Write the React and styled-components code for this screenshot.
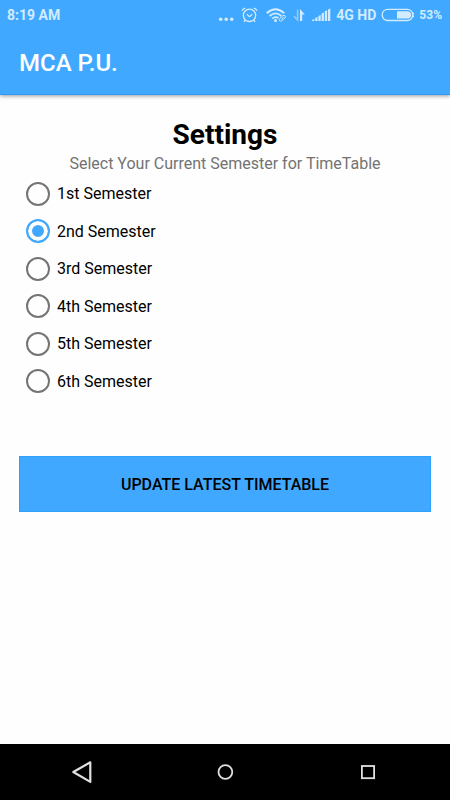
import React, { useState } from "react";
import styled, { createGlobalStyle } from "styled-components";

const blue = "#40a9ff";
const pale = "#d3ebff";

const GlobalStyle = createGlobalStyle`
  *, *::before, *::after { box-sizing: border-box; }
  body { margin: 0; background: #fefefe; font-family: Roboto, "Liberation Sans", sans-serif; }
`;

const Screen = styled.div`
  min-height: 100vh;
  display: flex;
  flex-direction: column;
  background: #fefefe;
`;

const Header = styled.header`
  background: ${blue};
  border-bottom: 1px solid #2b9cf6;
  box-shadow: 0 1px 4px rgba(0, 0, 0, 0.4);
`;

const StatusBar = styled.div`
  display: flex;
  align-items: center;
  justify-content: space-between;
  height: 30px;
  padding: 0 8px 0 7px;
  color: ${pale};
  font-size: 14px;
  font-weight: 700;
`;

const StatusIcons = styled.div`
  display: flex;
  align-items: center;
  gap: 5px;
  svg { display: block; }
`;

const Percent = styled.span`
  font-size: 12px;
`;

const AppBar = styled.div`
  display: flex;
  align-items: center;
  height: 64px;
  padding: 2px 19px 0;
`;

const AppTitle = styled.h1`
  margin: 0;
  color: #fff;
  font-size: 24px;
  font-weight: 500;
  line-height: 32px;
`;

const Content = styled.main`
  flex: 1;
  display: flex;
  flex-direction: column;
  padding: 22px 19px;
`;

const Heading = styled.h2`
  margin: 0;
  color: #000;
  font-size: 28px;
  font-weight: 700;
  line-height: 36px;
  text-align: center;
`;

const Semesters = styled.fieldset`
  margin: 0;
  padding: 0;
  border: 0;
  min-width: 0;
`;

const Hint = styled.legend`
  width: 100%;
  padding: 0;
  color: #737373;
  font-size: 16px;
  line-height: 22px;
  text-align: center;
`;

const Options = styled.div`
  display: grid;
  grid-template-rows: repeat(6, 1fr);
  height: 225px;
`;

const Option = styled.label`
  display: flex;
  align-items: center;
  gap: 7px;
  padding-left: 7px;
  color: #000;
  font-size: 16px;
`;

const Radio = styled.input`
  appearance: none;
  flex: none;
  width: 24px;
  height: 24px;
  margin: 0;
  border: 2px solid #747474;
  border-radius: 50%;
  background: #fefefe;

  &:checked {
    border-color: ${blue};
    background: ${blue};
    box-shadow: inset 0 0 0 4px #fefefe;
  }
`;

const UpdateButton = styled.button`
  height: 56px;
  margin: 56px 0 0;
  padding: 0 16px;
  border: 1px solid #2fa0fb;
  background: ${blue};
  color: #000;
  font-family: inherit;
  font-size: 16px;
  font-weight: 500;
  text-transform: uppercase;
`;

const NavBar = styled.nav`
  display: grid;
  grid-template-columns: repeat(3, 1fr);
  height: 56px;
  padding: 0 11px;
  background: #000;
`;

const NavButton = styled.button`
  display: flex;
  align-items: center;
  justify-content: center;
  padding: 0;
  border: 0;
  background: transparent;
  color: #e0e0e0;
`;

const MoreIcon = () => (
  <svg width="18" height="16" viewBox="0 0 18 16" fill={pale} aria-hidden="true">
    <circle cx="2.7" cy="12.3" r="1.8" />
    <circle cx="8.2" cy="12.3" r="1.8" />
    <circle cx="13.7" cy="12.3" r="1.8" />
  </svg>
);

const AlarmIcon = () => (
  <svg width="20" height="16" viewBox="0 0 20 16" fill="none" stroke={pale} aria-hidden="true">
    <circle cx="8.5" cy="8.3" r="6.2" strokeWidth="1.3" />
    <path d="M5.8 7.2 8.5 9.6l2.8-2.4" strokeWidth="1.2" />
    <path d="M1 3.7Q2 1.6 4.3 1.1M12.7 1.1q2.3.5 3.3 2.6" strokeWidth="1.3" />
    <path d="m4.3 12.8-1.4 2M12.7 12.8l1.4 2" strokeWidth="1.3" />
  </svg>
);

const WifiIcon = () => (
  <svg width="22" height="16" viewBox="0 0 22 16" fill="none" stroke={pale} aria-hidden="true">
    <path d="M.8 6.2Q9.5-1.6 18.2 6.2" strokeWidth="2" />
    <path d="M3.6 9q5.9-5.2 11.8 0" strokeWidth="1.8" />
    <path d="M6.3 11.6q3.3-2.8 6.1-.6" strokeWidth="1.7" />
    <circle cx="9.5" cy="13.4" r="1.5" fill={pale} stroke="none" />
    <path d="m13.8 11.5 3-2.7q1.5-1 2.3 0t-.3 2.2l-3 2.7q-1.4 1-2.3 0t.3-2.2Zm1.6.8 2.2-1.9" strokeWidth="1" />
  </svg>
);

const DataIcon = () => (
  <svg width="14" height="16" viewBox="0 0 14 16" fill="none" aria-hidden="true">
    <path d="M4.6 2.5V13L.8 9.2" stroke={pale} strokeOpacity=".5" strokeWidth="1.7" />
    <path d="M7 14V2l4.8 5.5H9.2V14Z" fill={pale} />
  </svg>
);

const SignalIcon = () => (
  <svg width="19" height="16" viewBox="0 0 19 16" fill={pale} aria-hidden="true">
    <path d="M0 14v-1l2.3-1v2ZM3.2 14v-3l2.3-1v4ZM6.4 14V9l2.3-1v6ZM9.6 14V6.5l2.3-1V14ZM12.8 14V4.2l2.3-1V14ZM16 14V2.4l2.3-1V14Z" />
  </svg>
);

const BatteryIcon = () => (
  <svg width="33" height="14" viewBox="0 0 33 14" aria-hidden="true">
    <rect x="1.2" y="1.3" width="30.5" height="11.2" rx="5.4" fill="none" stroke={pale} strokeWidth="1.3" />
    <path d="M16 3.2h9.6q4.5 0 4.5 3.7t-4.5 3.7H16Z" fill={pale} />
    <path d="M32.3 4.5q1.4 2.4 0 4.8" fill="none" stroke={pale} />
  </svg>
);

const BackIcon = () => (
  <svg width="22" height="24" viewBox="0 0 22 24" fill="none" stroke="currentColor" strokeWidth="2.2" strokeLinejoin="round" aria-hidden="true">
    <path d="M19.3 2.3v19.6L2.3 12Z" />
  </svg>
);

const HomeIcon = () => (
  <svg width="18" height="18" viewBox="0 0 18 18" fill="none" stroke="currentColor" strokeWidth="1.8" aria-hidden="true">
    <circle cx="9.4" cy="9" r="6.9" />
  </svg>
);

const RecentIcon = () => (
  <svg width="16" height="16" viewBox="0 0 16 16" fill="none" stroke="currentColor" strokeWidth="1.8" aria-hidden="true">
    <rect x="1.9" y="2" width="12.2" height="12.2" />
  </svg>
);

const semesters = ["1st", "2nd", "3rd", "4th", "5th", "6th"];

export default function App() {
  const [current, setCurrent] = useState("2nd");

  return (
    <Screen>
      <GlobalStyle />
      <Header>
        <StatusBar>
          <span>8:19 AM</span>
          <StatusIcons>
            <MoreIcon />
            <AlarmIcon />
            <WifiIcon />
            <DataIcon />
            <SignalIcon />
            <span>4G HD</span>
            <BatteryIcon />
            <Percent>53%</Percent>
          </StatusIcons>
        </StatusBar>
        <AppBar>
          <AppTitle>MCA P.U.</AppTitle>
        </AppBar>
      </Header>
      <Content>
        <Heading>Settings</Heading>
        <Semesters>
          <Hint>Select Your Current Semester for TimeTable</Hint>
          <Options>
            {semesters.map((name) => (
              <Option key={name}>
                <Radio
                  type="radio"
                  name="semester"
                  value={name}
                  checked={current === name}
                  onChange={() => setCurrent(name)}
                />
                {name} Semester
              </Option>
            ))}
          </Options>
        </Semesters>
        <UpdateButton type="button">Update latest timetable</UpdateButton>
      </Content>
      <NavBar>
        <NavButton type="button" aria-label="Back"><BackIcon /></NavButton>
        <NavButton type="button" aria-label="Home"><HomeIcon /></NavButton>
        <NavButton type="button" aria-label="Recent apps"><RecentIcon /></NavButton>
      </NavBar>
    </Screen>
  );
}
